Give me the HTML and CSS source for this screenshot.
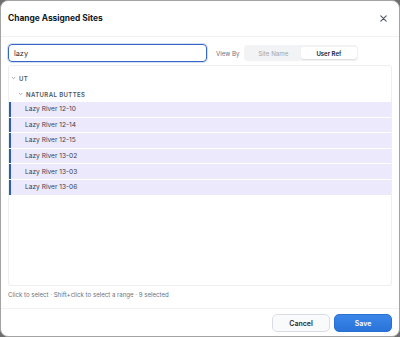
FILE: index.html
```html
<!DOCTYPE html>
<html>
<head>
<meta charset="utf-8">
<link rel="stylesheet" href="styles.css">
</head>
<body>
<div class="modal">
  <div class="header">
    <div class="title">Change Assigned Sites</div>
    <svg class="close" width="7" height="7" viewBox="0 0 7 7"><path d="M0.8 0.8L6.2 6.2M6.2 0.8L0.8 6.2" stroke="#4b5563" stroke-width="1.1" stroke-linecap="round"/></svg>
  </div>
  <div class="body">
    <div class="toolbar">
      <div class="search">lazy</div>
      <div class="viewby">View By</div>
      <div class="seg">
        <div class="seg-item">Site Name</div>
        <div class="seg-item active">User Ref</div>
      </div>
    </div>
    <div class="tree">
      <div class="group">
        <svg class="chev" width="5" height="4" viewBox="0 0 5 4"><path d="M0.8 1L2.5 2.7L4.2 1" fill="none" stroke="#9ca3af" stroke-width="0.9"/></svg>
        <span>UT</span>
      </div>
      <div class="group sub">
        <svg class="chev" width="5" height="4" viewBox="0 0 5 4"><path d="M0.8 1L2.5 2.7L4.2 1" fill="none" stroke="#9ca3af" stroke-width="0.9"/></svg>
        <span>NATURAL BUTTES</span>
      </div>
      <div class="rows">
        <div class="row">Lazy River 12-10</div>
        <div class="row">Lazy River 12-14</div>
        <div class="row">Lazy River 12-15</div>
        <div class="row">Lazy River 13-02</div>
        <div class="row">Lazy River 13-03</div>
        <div class="row">Lazy River 13-06</div>
      </div>
    </div>
    <div class="hint">Click to select · Shift+click to select a range · 9 selected</div>
  </div>
  <div class="footer">
    <button class="btn cancel">Cancel</button>
    <button class="btn save">Save</button>
  </div>
</div>
</body>
</html>
```
FILE: styles.css
```css
html, body {
  margin: 0;
  padding: 0;
}
body {
  width: 400px;
  height: 337px;
  background: #6e6e6e;
  font-family: Inter, "Noto Sans", sans-serif;
  color: #1f2937;
}
.modal {
  box-sizing: border-box;
  width: 400px;
  height: 337px;
  background: #ffffff;
  border: 1px solid #a3a3a3;
  border-radius: 8px;
  display: flex;
  flex-direction: column;
  overflow: hidden;
}
.header {
  height: 34px;
  flex: none;
  display: flex;
  align-items: center;
  justify-content: space-between;
  padding: 0 12px 1px 7px;
  border-bottom: 1px solid #f0f1f3;
}
.title {
  font-size: 8.4px;
  font-weight: 700;
  color: #111827;
}
.close {
  display: block;
}
.body {
  flex: 1;
  display: flex;
  flex-direction: column;
  padding: 7px 7px 0 7px;
}
.toolbar {
  display: flex;
  align-items: center;
  height: 18px;
}
.search {
  box-sizing: border-box;
  width: 199px;
  height: 18px;
  border: 1px solid #3567c8;
  border-radius: 4px;
  box-shadow: 0 0 0 1px rgba(53,103,200,0.22);
  font-size: 7.3px;
  color: #1f2937;
  display: flex;
  align-items: center;
  padding-left: 5px;
}
.viewby {
  margin-left: 9px;
  font-size: 6.2px;
  color: #6b7280;
}
.seg {
  margin-left: 4px;
  display: flex;
  background: #f1f3f5;
  border-radius: 4px;
  padding: 2px 1px 2px 2px;
  width: 114px;
  box-sizing: border-box;
  height: 16px;
}
.seg-item {
  flex: 1;
  display: flex;
  align-items: center;
  justify-content: center;
  font-size: 6.2px;
  color: #9ca3af;
  border-radius: 3px;
}
.seg-item.active {
  background: #ffffff;
  color: #111827;
  font-weight: 600;
  font-size: 6px;
  box-shadow: 0 1px 1px rgba(0,0,0,0.08);
}
.tree {
  margin-top: 3px;
  height: 221px;
  box-sizing: border-box;
  border: 1px solid #eceef1;
  border-radius: 3px;
  padding-top: 4px;
}
.group {
  height: 16px;
  display: flex;
  align-items: center;
  font-size: 6px;
  font-weight: 600;
  letter-spacing: 0.4px;
  color: #4b5563;
  padding-left: 2px;
}
.group.sub {
  padding-left: 9px;
}
.chev {
  margin-right: 3px;
  display: block;
}
.rows {
  display: flex;
  flex-direction: column;
  gap: 1px;
}
.row {
  height: 14.6px;
  display: flex;
  align-items: center;
  background: #ebe9fb;
  border-left: 2px solid #2b5cb8;
  padding-left: 14px;
  font-size: 6.6px;
  color: #374151;
}
.hint {
  margin-top: 4.5px;
  font-size: 6.1px;
  color: #6b7280;
}
.footer {
  height: 28px;
  flex: none;
  box-sizing: border-box;
  border-top: 1px solid #f0f1f3;
  display: flex;
  align-items: flex-start;
  justify-content: flex-end;
  gap: 4px;
  padding: 5px 7px 0 0;
}
.btn {
  font-family: Inter, "Noto Sans", sans-serif;
  width: 58px;
  height: 18px;
  border-radius: 5px;
  font-size: 7px;
  font-weight: 600;
  padding: 0;
}
.cancel {
  background: #f9fafb;
  border: 1px solid #d9dde3;
  color: #1f2937;
}
.save {
  background: linear-gradient(#3b87e8, #2a73d9);
  border: 1px solid #2a6fd3;
  color: #ffffff;
}
```
